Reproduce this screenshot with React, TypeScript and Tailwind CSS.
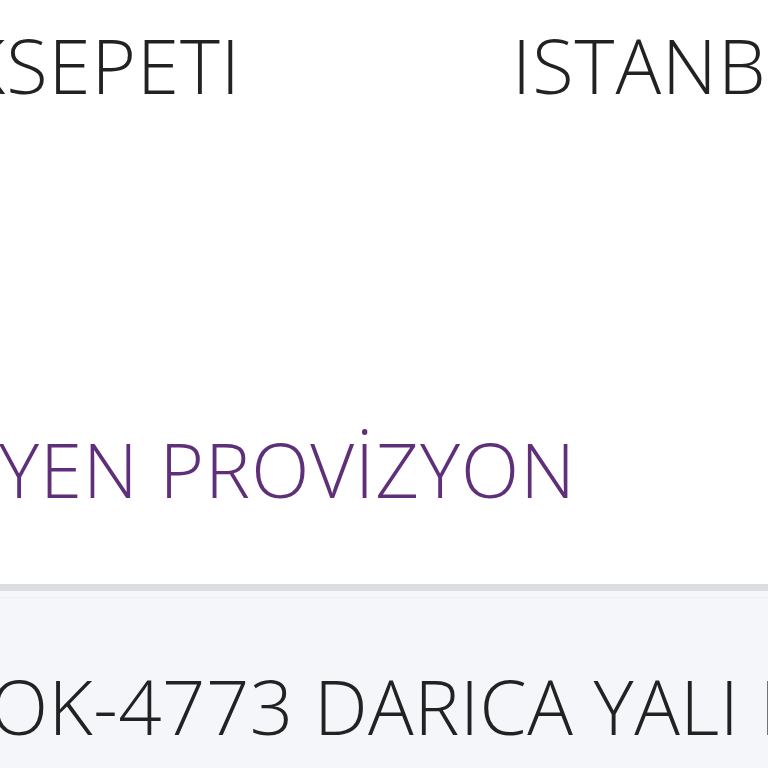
import React from 'react';

export default function App() {
  return (
    <div className="w-[768px] h-[768px] overflow-hidden bg-white font-['Open_Sans',sans-serif] font-light text-[76px] leading-none tracking-[1px]">
      <div className="flex pt-[27px] text-[#222222] whitespace-nowrap">
        <div className="w-[241px] shrink-0 flex justify-end">
          <span>YEMEKSEPETI</span>
        </div>
        <div className="ml-[271px] shrink-0">ISTANBUL</div>
      </div>
      <div className="flex mt-[328px] whitespace-nowrap text-[#5f3079]">
        <div className="w-[576px] shrink-0 flex justify-end">
          <span>BEKLEYEN PROVİZYON</span>
        </div>
      </div>
      <div className="mt-[77px] border-t-[7px] border-[#dcdde3] bg-[#f5f6fa] h-[200px]">
        <div className="border-t border-[#eceef3] mt-[6px]" />
        <div className="-ml-[52px] mt-[70px] whitespace-nowrap text-[#222222] tracking-[0.5px]">
          SOK-4773 DARICA YALI  MAH
        </div>
      </div>
    </div>
  );
}
